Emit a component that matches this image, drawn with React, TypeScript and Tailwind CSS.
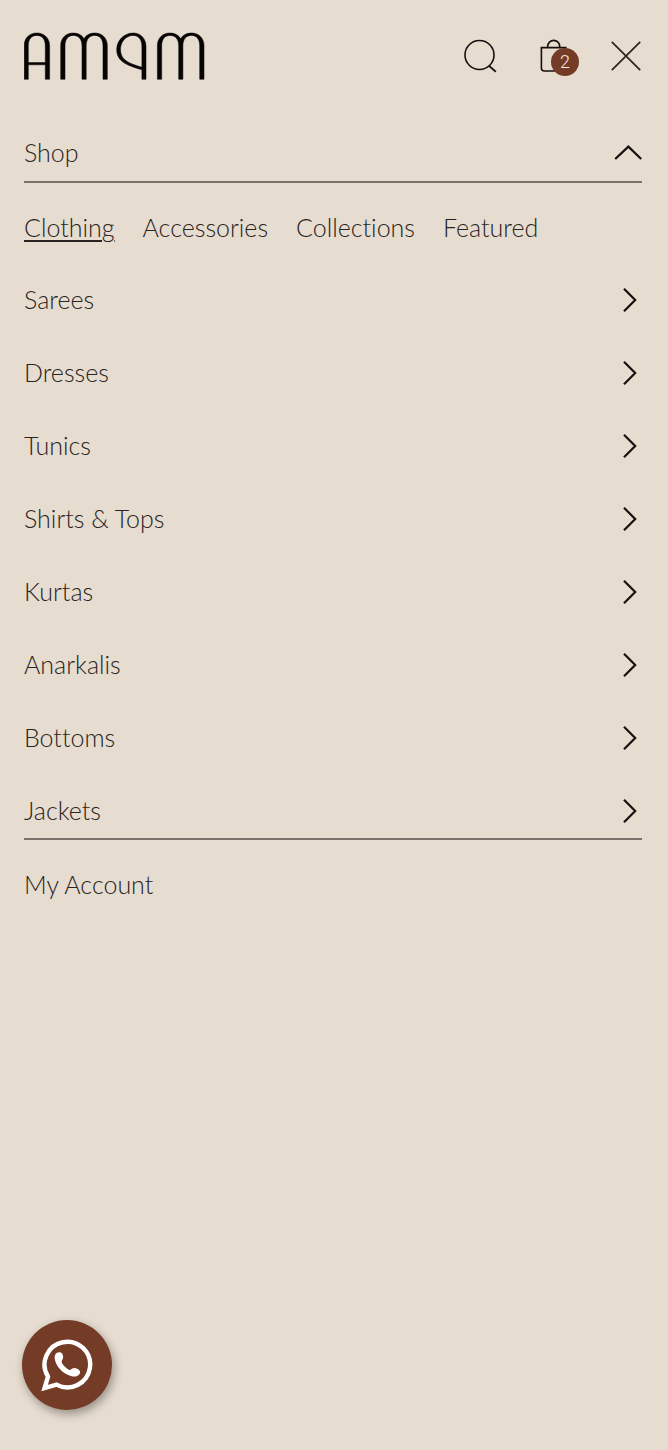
import { useState } from "react";

const tabs = ["Clothing", "Accessories", "Collections", "Featured"];

const categories = [
  "Sarees",
  "Dresses",
  "Tunics",
  "Shirts & Tops",
  "Kurtas",
  "Anarkalis",
  "Bottoms",
  "Jackets",
];

function Logo() {
  return (
    <svg width="181" height="48" viewBox="0 0 181 48" fill="#070504" stroke="#070504" strokeWidth="0.5" role="img" aria-label="AMQM">
      <path d="M.2 47.300V13.500C.2 6 5.500 1 12.800 1s12.800 5 12.800 12.500v33.800h-4.300V32.800h-17v14.500zM4.300 30.600h17V14c0-7-3.200-10.600-8.500-10.600S4.300 7 4.300 14z" />
      <path d="M36.700 47.300V13.500C36.700 6 42 1 49 1c5 0 9 2 11 5.800C62 3 66 1 71 1c7 0 12.300 5 12.300 12.500v33.800H79V14c0-7-3-10.600-8.300-10.600S62.200 7 62.200 14v33.300H58V14c0-7-3.300-10.600-8.600-10.600S41 7 41 14v33.300z" />
      <path d="M122 47.300V14.500C122 6.500 116.500 1 109.300 1 99.500 1 92.700 9 92.700 17.500c0 12.500 11 16 25.200 20.300v9.500zM117.900 35.200C104.500 31.300 96.500 28 96.500 17.500c0-7.500 5.300-14.100 12.500-14.100 5.700 0 8.900 4.100 8.900 11.100z" />
      <path transform="translate(96.700 0)" d="M36.700 47.300V13.500C36.700 6 42 1 49 1c5 0 9 2 11 5.800C62 3 66 1 71 1c7 0 12.300 5 12.300 12.500v33.800H79V14c0-7-3-10.600-8.300-10.600S62.200 7 62.200 14v33.300H58V14c0-7-3.300-10.600-8.600-10.600S41 7 41 14v33.300z" />
    </svg>
  );
}

function SearchIcon() {
  return (
    <svg width="34" height="34" viewBox="0 0 34 34" fill="none" stroke="#15110f" strokeWidth="1.600" className="overflow-visible">
      <circle cx="18.500" cy="16" r="14.500" />
      <path d="M27.800 26.600l7 6.200" strokeWidth="1.900" />
    </svg>
  );
}

function BagIcon() {
  return (
    <svg width="28" height="34" viewBox="0 0 28 34" fill="none" stroke="#15110f" strokeWidth="1.600">
      <path d="M2.400 8.600h24.400v20.400a3 3 0 0 1-3 3H5.400a3 3 0 0 1-3-3z" />
      <path d="M8.700 8.600V7.400a6 6 0 0 1 12 0v1.200" />
    </svg>
  );
}

function CloseIcon() {
  return (
    <svg width="31" height="30" viewBox="0 0 31 30" fill="none" stroke="#2a2522" strokeWidth="1.700">
      <path d="M.8.800l28.400 28.400M29.200.800L.8 29.200" />
    </svg>
  );
}

function ChevronUp({ open }: { open: boolean }) {
  return (
    <svg width="28" height="16" viewBox="0 0 28 16" fill="none" stroke="#15110f" strokeWidth="2.200" className={open ? "" : "rotate-180"}>
      <path d="M1.200 14L14.400 1.600l12.800 12.400" />
    </svg>
  );
}

function ChevronRight() {
  return (
    <svg width="14" height="24" viewBox="0 0 14 24" fill="none" stroke="#15110f" strokeWidth="2.200">
      <path d="M1 .8L12.200 12 1 23.200" />
    </svg>
  );
}

function WhatsappIcon() {
  return (
    <svg width="54" height="54" viewBox="0 0 54 54" fill="none">
      <path
        d="M4.600 50L8 38.600A22.800 22.800 0 1 1 16.500 46.600z"
        stroke="#fff"
        strokeWidth="4.400"
      />
      <path
        d="M16.300 15.200c1.600-1.400 4.600-1.400 5.800.4 1 1.600 1.300 3.600.8 5.200-.4 1.200-1.400 1.900-1.200 3.200.3 1.600 1.600 3.100 3 4.500 1.400 1.500 3 2.900 4.700 3.400 1.200.3 1.800-.6 2.800-1.300 1.600-1 3.300-.8 5 .1 1.700.8 2.900 1.900 2.900 3.400 0 2.700-2.600 4.500-5.700 4.500-8.800-.2-18.900-9.400-19.700-18.300-.1-2 .2-3.900 1.600-5.100z"
        fill="#fff"
      />
    </svg>
  );
}

export default function App() {
  const [open, setOpen] = useState(true);
  const [active, setActive] = useState("Clothing");

  return (
    <div className="min-h-screen bg-[#e6dcd0] pl-6 pr-[26px] pt-8 font-['Lato',sans-serif] text-[25px] font-light leading-[33px] text-[#292421] [font-variant-ligatures:none]">
      <header className="flex h-12 items-center justify-between">
        <a href="#" aria-label="Home">
          <Logo />
        </a>
        <div className="flex items-center">
          <button type="button" aria-label="Search" className="mr-11">
            <SearchIcon />
          </button>
          <button type="button" aria-label="Cart" className="relative mr-11">
            <BagIcon />
            <span className="absolute -right-3 top-[9px] flex size-7 items-center justify-center rounded-full bg-[#743c27] font-['Roboto',sans-serif] text-lg text-[#f8ece3]">
              2
            </span>
          </button>
          <button type="button" aria-label="Close menu">
            <CloseIcon />
          </button>
        </div>
      </header>

      <nav className="mt-11">
        <button
          type="button"
          aria-expanded={open}
          onClick={() => setOpen(!open)}
          className="flex w-full items-center justify-between border-b-2 border-[#7c726b] py-3 text-left"
        >
          Shop
          <ChevronUp open={open} />
        </button>

        {open && (
          <div className="border-b-2 border-[#7c726b] pb-2.5 pt-7">
            <div className="flex flex-wrap gap-x-7">
              {tabs.map((tab) => (
                <button
                  key={tab}
                  type="button"
                  onClick={() => setActive(tab)}
                  className={tab === active ? "underline decoration-2 underline-offset-3" : ""}
                >
                  {tab}
                </button>
              ))}
            </div>
            <ul className="mt-10 flex flex-col gap-10">
              {categories.map((name) => (
                <li key={name} className="-mt-px">
                  <a href="#" className="flex items-center justify-between pb-px pr-[5px]">
                    {name}
                    <ChevronRight />
                  </a>
                </li>
              ))}
            </ul>
          </div>
        )}

        <a href="#" className="mt-7 block">
          My Account
        </a>
      </nav>

      <a
        href="#"
        aria-label="Chat on WhatsApp"
        className="fixed bottom-10 left-[22px] flex size-[90px] items-center justify-center rounded-full bg-[#743c27] shadow-[2px_4px_10px_rgba(0,0,0,0.35)]"
      >
        <WhatsappIcon />
      </a>
    </div>
  );
}
